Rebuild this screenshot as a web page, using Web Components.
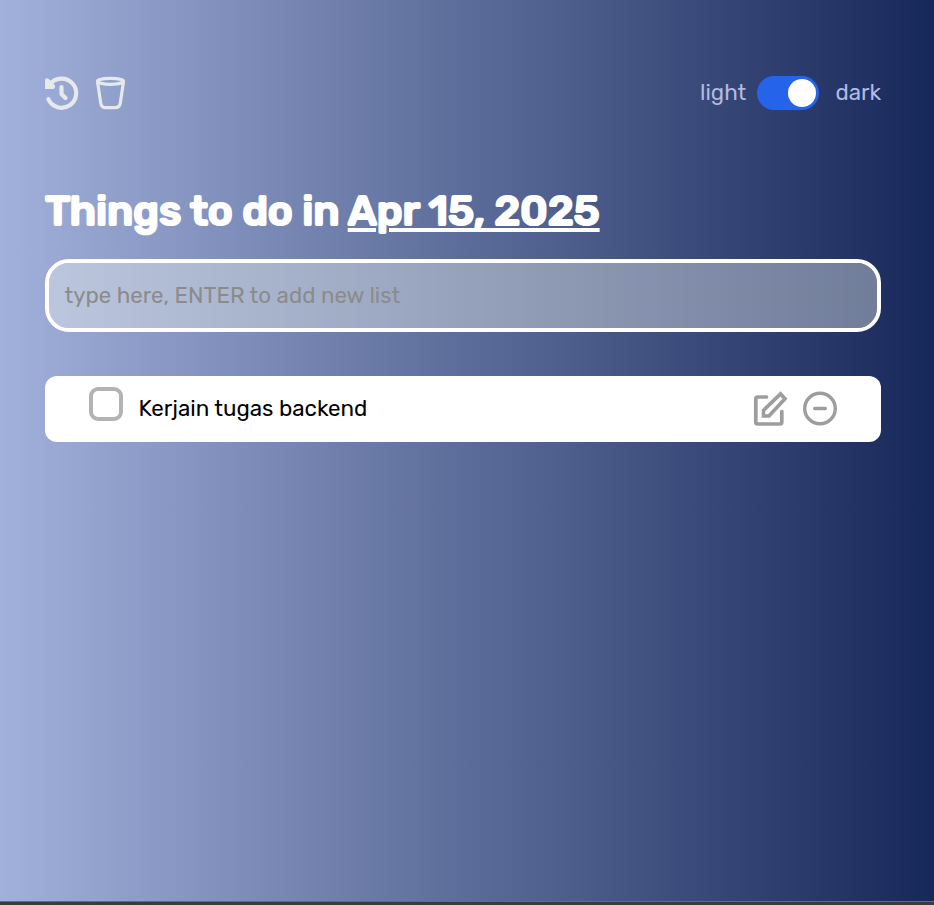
<!DOCTYPE html>
<html lang="en">
<head>
<meta charset="utf-8">
<title>Todo</title>
<style>
html,body{margin:0;height:100%;overflow:hidden}
body{font-family:Rubik,Roboto,"Liberation Sans",sans-serif}
</style>
</head>
<body>
<todo-app>
  <todo-toolbar></todo-toolbar>
  <todo-heading>Apr 15, 2025</todo-heading>
  <todo-input>type here, ENTER to add new list</todo-input>
  <todo-item>Kerjain tugas backend</todo-item>
</todo-app>
<script>
const define = (name, html) => customElements.define(name, class extends HTMLElement {
  constructor() {
    super();
    const t = document.createElement('template');
    t.innerHTML = html;
    this.attachShadow({mode: 'open'}).append(t.content.cloneNode(true));
  }
});

define('todo-app', `<style>
:host{display:flex;flex-direction:column;box-sizing:border-box;height:905px;padding:76px 53px 0 45px;
 background:linear-gradient(#64698a,#64698a) 0 901px/100% 1px no-repeat,linear-gradient(#3b3b3d,#3b3b3d) 0 902px/100% 3px no-repeat,linear-gradient(90deg,#a2b1db,#162759)}
</style><slot></slot>`);

define('theme-switch', `<style>
:host{display:flex;align-items:center;height:34px;color:#b0bbe1;font-size:22.3px;line-height:34px}
.a{width:57px}.b{width:45.500px;white-space:nowrap}
.track{display:flex;justify-content:flex-end;box-sizing:border-box;width:62px;height:34px;padding:3px;border-radius:17px;background:#2563eb;margin-right:16.500px}
.knob{width:28px;height:28px;border-radius:50%;background:#fff}
</style><span class="a">light</span><span class="track"><span class="knob"></span></span><span class="b">dark</span>`);

define('todo-toolbar', `<style>
:host{display:flex;justify-content:space-between;height:34px}
.icons{display:flex;gap:15px}
svg{display:block;overflow:visible}
</style><div class="icons">
<svg width="34" height="34" viewBox="0 0 34 34" fill="none" stroke="#e5e8ec" stroke-width="4.200" stroke-linecap="round" stroke-linejoin="round"><path d="M3.300 23.200A14.600 14.600 0 1 0 5 8.300M16.500 11.200v6.700l4 4"/><path d="M0 3.400Q1.500 1.200 3.800 3L9 8.300Q11.300 10.800 8.800 13H0Z" fill="#e5e8ec" stroke="none"/></svg>
<svg width="33" height="34" viewBox="0 0 33 34" fill="none" stroke="#e5e8ec" stroke-width="3.200" stroke-linejoin="round"><ellipse cx="16.500" cy="5.300" rx="13" ry="3"/><path d="M3.500 5.500L6.700 27C7.100 30 8.700 31.700 12 31.700h9C24.300 31.700 25.900 30 26.300 27L29.500 5.500"/></svg>
</div><theme-switch></theme-switch>`);

define('todo-heading', `<style>
:host{display:block;margin-top:75px;height:52px;color:#fff;font-size:42.200px;line-height:52px;font-weight:500;letter-spacing:-.16px;-webkit-text-stroke:2.200px #fff;white-space:nowrap}
h1{margin:0;font:inherit}
.b{text-decoration:underline;text-decoration-thickness:4px;text-underline-offset:3px}
</style><h1><span>Things to do in </span><span class="b"><slot></slot></span></h1>`);

define('todo-input', `<style>
:host{display:flex;align-items:center;box-sizing:border-box;margin-top:22px;height:73px;padding:0 15.500px;border:4px solid #fff;border-radius:24px;background:rgba(238,242,238,.4);background-clip:padding-box;color:#8b8b8b;font-size:22.3px}
</style><span><slot></slot></span>`);

define('todo-item', `<style>
:host{display:flex;align-items:center;box-sizing:border-box;margin-top:44px;height:66px;padding:0 44px;border-radius:12px;background:#fff;color:#000;font-size:22.35px}
.box{box-sizing:border-box;width:34px;height:34px;border:4px solid #b3b3b3;border-radius:9px;margin:-10px 15.500px 0 0}
.text{flex:1;margin-top:-1px}
svg{display:block;margin-left:16px;overflow:visible}
</style><span class="box"></span><span class="text"><slot></slot></span>
<svg width="34" height="34" viewBox="0 0 34 34" fill="none" stroke="#9d9d9d" stroke-width="3.700" stroke-linecap="round" stroke-linejoin="round"><path d="M13.500 5H4.800Q2.800 5 2.800 7V30Q2.800 32 4.800 32H26.800Q28.800 32 28.800 30V19.500"/><path d="M10.500 18.400L27.500 1.900L32 6.700L16 24H10.500Z" stroke-width="3.600" stroke-linejoin="miter"/></svg>
<svg width="34" height="34" viewBox="0 0 34 34" fill="none" stroke="#9d9d9d" stroke-width="3.400" stroke-linecap="round"><circle cx="17" cy="16.500" r="15.300"/><path d="M11.700 16.500h10.600"/></svg>`);
</script>
</body>
</html>
